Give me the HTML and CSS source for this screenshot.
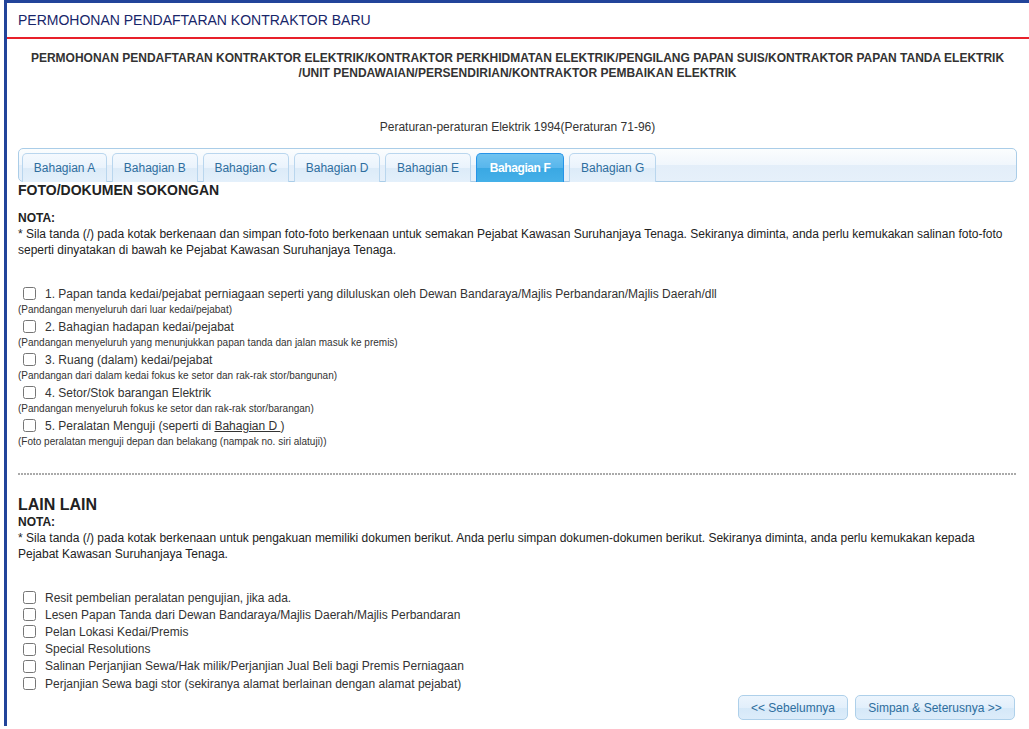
FILE: index.html
```html
<!DOCTYPE html>
<html>
<head>
<meta charset="utf-8">
<link rel="stylesheet" href="styles.css">
</head>
<body>
<div class="page">
  <div class="title">PERMOHONAN PENDAFTARAN KONTRAKTOR BARU</div>
  <div class="content">
    <div class="heading">PERMOHONAN PENDAFTARAN KONTRAKTOR ELEKTRIK/KONTRAKTOR PERKHIDMATAN ELEKTRIK/PENGILANG PAPAN SUIS/KONTRAKTOR PAPAN TANDA ELEKTRIK /UNIT PENDAWAIAN/PERSENDIRIAN/KONTRAKTOR PEMBAIKAN ELEKTRIK</div>
    <div class="reg">Peraturan-peraturan Elektrik 1994(Peraturan 71-96)</div>

    <div class="tabs">
      <div class="tab">Bahagian A</div>
      <div class="tab">Bahagian B</div>
      <div class="tab">Bahagian C</div>
      <div class="tab">Bahagian D</div>
      <div class="tab">Bahagian E</div>
      <div class="tab active">Bahagian F</div>
      <div class="tab">Bahagian G</div>
    </div>

    <div class="sec-title">FOTO/DOKUMEN SOKONGAN</div>
    <div class="nota">NOTA:</div>
    <div class="note-text">* Sila tanda (/) pada kotak berkenaan dan simpan foto-foto berkenaan untuk semakan Pejabat Kawasan Suruhanjaya Tenaga. Sekiranya diminta, anda perlu kemukakan salinan foto-foto seperti dinyatakan di bawah ke Pejabat Kawasan Suruhanjaya Tenaga.</div>

    <div class="photo-list">
      <label class="item"><input type="checkbox"><span>1. Papan tanda kedai/pejabat perniagaan seperti yang diluluskan oleh Dewan Bandaraya/Majlis Perbandaran/Majlis Daerah/dll</span></label>
      <div class="hint">(Pandangan menyeluruh dari luar kedai/pejabat)</div>
      <label class="item"><input type="checkbox"><span>2. Bahagian hadapan kedai/pejabat</span></label>
      <div class="hint">(Pandangan menyeluruh yang menunjukkan papan tanda dan jalan masuk ke premis)</div>
      <label class="item"><input type="checkbox"><span>3. Ruang (dalam) kedai/pejabat</span></label>
      <div class="hint">(Pandangan dari dalam kedai fokus ke setor dan rak-rak stor/bangunan)</div>
      <label class="item"><input type="checkbox"><span>4. Setor/Stok barangan Elektrik</span></label>
      <div class="hint">(Pandangan menyeluruh fokus ke setor dan rak-rak stor/barangan)</div>
      <label class="item"><input type="checkbox"><span>5. Peralatan Menguji (seperti di <a class="link" href="#">Bahagian D </a>)</span></label>
      <div class="hint">(Foto peralatan menguji depan dan belakang (nampak no. siri alatuji))</div>
    </div>

    <div class="dots"></div>

    <div class="sec-title big">LAIN LAIN</div>
    <div class="nota tight">NOTA:</div>
    <div class="note-text">* Sila tanda (/) pada kotak berkenaan untuk pengakuan memiliki dokumen berikut. Anda perlu simpan dokumen-dokumen berikut. Sekiranya diminta, anda perlu kemukakan kepada Pejabat Kawasan Suruhanjaya Tenaga.</div>

    <div class="doc-list">
      <label class="item"><input type="checkbox"><span>Resit pembelian peralatan pengujian, jika ada.</span></label>
      <label class="item"><input type="checkbox"><span>Lesen Papan Tanda dari Dewan Bandaraya/Majlis Daerah/Majlis Perbandaran</span></label>
      <label class="item"><input type="checkbox"><span>Pelan Lokasi Kedai/Premis</span></label>
      <label class="item"><input type="checkbox"><span>Special Resolutions</span></label>
      <label class="item"><input type="checkbox"><span>Salinan Perjanjian Sewa/Hak milik/Perjanjian Jual Beli bagi Premis Perniagaan</span></label>
      <label class="item"><input type="checkbox"><span>Perjanjian Sewa bagi stor (sekiranya alamat berlainan dengan alamat pejabat)</span></label>
    </div>

    <div class="actions">
      <button class="btn btn-prev">&lt;&lt; Sebelumnya</button>
      <button class="btn btn-next">Simpan &amp; Seterusnya &gt;&gt;</button>
    </div>
  </div>
</div>
</body>
</html>
```

FILE: styles.css
```css
html, body {
  margin: 0;
  padding: 0;
  background: #fff;
}
body {
  font-family: "Liberation Sans", Arial, sans-serif;
  font-size: 12px;
  color: #333;
}
.page {
  margin-left: 4px;
  border-top: 3px solid #22449a;
  border-left: 3px solid #22449a;
  min-height: 726px;
  box-sizing: border-box;
}
.title {
  height: 34px;
  line-height: 35px;
  padding-left: 11px;
  font-size: 14px;
  color: #18266a;
  border-bottom: 2px solid #e8202a;
}
.content {
  padding: 0 12px 0 11px;
}
.heading {
  margin-top: 12px;
  padding: 0 6px;
  text-align: center;
  font-weight: bold;
  font-size: 12px;
  line-height: 15px;
  color: #333;
}
.reg {
  margin-top: 38px;
  text-align: center;
  line-height: 16px;
  color: #333;
}
.tabs {
  margin-top: 13px;
  display: flex;
  gap: 5px;
  padding: 4px 3px 0;
  border: 1px solid #aacde8;
  border-radius: 5px;
  background: linear-gradient(#fbfdfe, #f0f6fc 50%, #e3eef9 51%, #e6f0fa);
}
.tab {
  height: 28px;
  line-height: 28px;
  padding: 0 10.8px;
  margin-bottom: -1px;
  border: 1px solid #b9d6ee;
  border-bottom: 0;
  border-radius: 5px 5px 0 0;
  background: linear-gradient(#f4f9fe, #eaf3fc 50%, #dcebf8 51%, #e4f0fb);
  color: #2e6e9e;
  font-size: 12px;
  white-space: nowrap;
}
.tab.active {
  border-color: #2694e8;
  background: linear-gradient(#6fc3f0, #58b6ec 50%, #3aa8e3 51%, #45b0e8);
  color: #fff;
  font-weight: bold;
  letter-spacing: -0.4px;
  padding: 0 12.8px;
}
.sec-title {
  font-size: 14px;
  font-weight: bold;
  line-height: 16px;
  color: #222;
}
.sec-title.big {
  font-size: 16px;
  line-height: 19px;
  margin-top: 20px;
}
.nota {
  margin-top: 12px;
  font-weight: bold;
  line-height: 16px;
  color: #222;
}
.nota.tight {
  margin-top: 0;
}
.note-text {
  line-height: 16px;
  color: #222;
}
.photo-list {
  margin-top: 27px;
}
.item {
  display: flex;
  align-items: center;
  height: 17px;
  color: #333;
}
.item input {
  width: 13px;
  height: 13px;
  margin: 0 9px 0 5px;
  flex: none;
}
.hint {
  height: 16px;
  line-height: 16px;
  font-size: 10px;
  color: #333;
}
.link {
  color: #333;
  text-decoration: underline;
}
.dots {
  margin-top: 23px;
  height: 1px;
  border-top: 1px solid transparent;
  background: repeating-linear-gradient(90deg, #aaa 0 2px, transparent 2px 3px);
}
.doc-list {
  margin-top: 27px;
}
.doc-list .item {
  height: 17.2px;
}
.actions {
  display: flex;
  justify-content: flex-end;
  gap: 7px;
  margin-top: 3px;
  padding-right: 2px;
}
.btn {
  box-sizing: border-box;
  height: 25px;
  padding: 0;
  white-space: nowrap;
  font-family: "Liberation Sans", Arial, sans-serif;
  font-size: 12px;
  color: #2e6e9e;
  border: 1px solid #aed0ea;
  border-radius: 5px;
  background: linear-gradient(#ecf5fd, #e2effb 50%, #d5e8f8 51%, #dcecfa);
}
.btn-prev {
  width: 110px;
}
.btn-next {
  width: 160px;
}
```
